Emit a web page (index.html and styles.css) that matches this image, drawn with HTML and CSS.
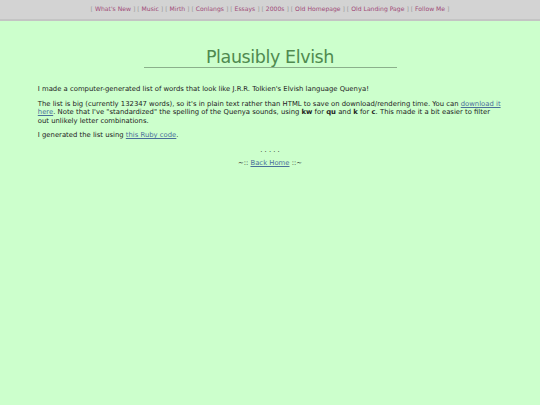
FILE: index.html
```html
<!DOCTYPE html>
<html>
<head>
<meta charset="utf-8">
<title>Plausibly Elvish</title>
<link rel="stylesheet" href="styles.css">
</head>
<body>
<div class="nav">
[ <a href="#">What's New</a> ] [ <a href="#">Music</a> ] [ <a href="#">Mirth</a> ] [ <a href="#">Conlangs</a> ] [ <a href="#">Essays</a> ] [ <a href="#">2000s</a> ] [ <a href="#">Old Homepage</a> ] [ <a href="#">Old Landing Page</a> ] [ <a href="#">Follow Me</a> ]
</div>
<div class="main">
<h1 class="title">Plausibly Elvish</h1>
<p>I made a computer-generated list of words that look like J.R.R. Tolkien's Elvish language Quenya!</p>
<p>The list is big (currently 132347 words), so it's in plain text rather than HTML to save on download/rendering time. You can <a href="#">download it here</a>. Note that I've "standardized" the spelling of the Quenya sounds, using <b>kw</b> for <b>qu</b> and <b>k</b> for <b>c</b>. This made it a bit easier to filter out unlikely letter combinations.</p>
<p>I generated the list using <a href="#">this Ruby code</a>.</p>
<div class="dots">. . . . .</div>
<div class="back">~:: <a href="#">Back Home</a> ::~</div>
</div>
</body>
</html>
```
FILE: styles.css
```css
html, body {
  margin: 0;
  padding: 0;
  background: #ccffcc;
  font-family: "DejaVu Sans", Verdana, sans-serif;
  color: #222;
}
.nav {
  background: #d3d3d3;
  border-bottom: 2px solid #c4c4c4;
  text-align: center;
  font-size: 6.1px;
  color: #999;
  height: 19px;
  line-height: 18px;
}
.nav a {
  color: #a04a78;
  text-decoration: none;
}
.main {
  margin: 0 7%;
  font-size: 6.85px;
  line-height: 8.5px;
}
.title {
  width: 253px;
  margin: 27px auto 17px;
  font-weight: normal;
  font-size: 17.5px;
  letter-spacing: -0.4px;
  line-height: 19px;
  color: #4f8a4f;
  text-align: center;
  border-bottom: 1px solid #8bb08b;
}
.main p {
  margin: 0 0 6px;
}
.main a {
  color: #4a6f9a;
}
.dots {
  text-align: center;
  margin-top: 6px;
}
.back {
  text-align: center;
  margin-top: 5px;
}
```
